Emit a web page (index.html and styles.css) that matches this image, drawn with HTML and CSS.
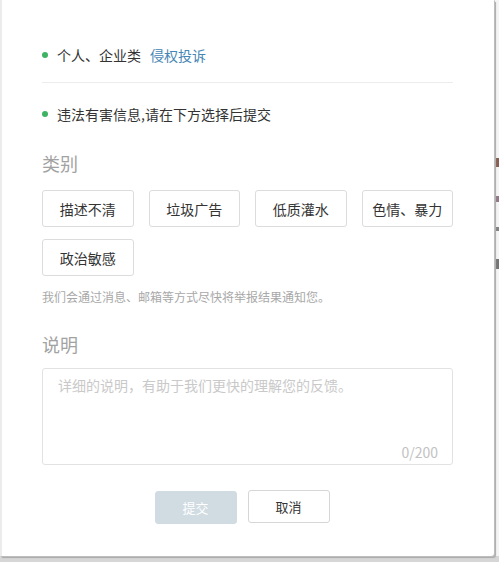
FILE: index.html
```html
<!DOCTYPE html>
<html lang="zh-CN">
<head>
<meta charset="utf-8">
<link rel="stylesheet" href="styles.css">
</head>
<body>
<div class="page">
  <div class="behind">
    <span class="frag f1"></span>
    <span class="frag f2"></span>
    <span class="frag f3"></span>
    <span class="frag f4"></span>
  </div>
  <div class="dialog">
    <div class="line first"><span class="dot"></span>个人、企业类<a class="link">侵权投诉</a></div>
    <div class="divider"></div>
    <div class="line second"><span class="dot"></span>违法有害信息,请在下方选择后提交</div>
    <div class="heading h-cat">类别</div>
    <div class="cats">
      <button class="cat">描述不清</button>
      <button class="cat">垃圾广告</button>
      <button class="cat">低质灌水</button>
      <button class="cat">色情、暴力</button>
      <button class="cat">政治敏感</button>
    </div>
    <div class="note">我们会通过消息、邮箱等方式尽快将举报结果通知您。</div>
    <div class="heading h-desc">说明</div>
    <div class="textbox">
      <textarea class="ta" placeholder="详细的说明，有助于我们更快的理解您的反馈。"></textarea>
      <div class="count">0/200</div>
    </div>
    <div class="footer">
      <button class="btn submit">提交</button>
      <button class="btn cancel">取消</button>
    </div>
  </div>
</div>
</body>
</html>
```

FILE: styles.css
```css
html, body {
  margin: 0;
  padding: 0;
}
body {
  width: 499px;
  height: 562px;
  overflow: hidden;
  background: #d6d6d6;
  font-family: "Noto Sans CJK SC", "Noto Sans", sans-serif;
  color: #333;
}
.page {
  position: relative;
  width: 499px;
  height: 562px;
}
.behind {
  position: absolute;
  right: 0;
  top: 0;
  width: 4px;
  height: 556px;
  background: #f4f4f4;
}
.frag {
  position: absolute;
  left: 1px;
  width: 3px;
  height: 9px;
  background: #555;
  opacity: 0.8;
}
.f1 { top: 158px; background: #6b3a2a; }
.f2 { top: 196px; height: 6px; background: #7a5a6a; }
.f3 { top: 227px; height: 4px; background: #666; }
.f4 { top: 259px; height: 10px; background: #555; }
.dialog {
  position: relative;
  box-sizing: border-box;
  width: 494px;
  height: 556px;
  background: #fff;
  border-left: 2px solid #ececec;
  border-radius: 0 0 3px 0;
  box-shadow: 1px 1px 0 #bdbdbd, 2px 2px 1px #a9a9a9;
  padding: 45px 41px 0 40px;
}
.line {
  display: flex;
  align-items: center;
  font-size: 14px;
  line-height: 20px;
  height: 20px;
  white-space: pre;
}
.dot {
  width: 6px;
  height: 6px;
  border-radius: 50%;
  background: #3db363;
  margin: 0 9px 0 0;
  flex: none;
}
.link {
  color: #4586b5;
  margin-left: 9px;
}
.divider {
  height: 1px;
  background: #ececec;
  margin: 17px 0 21px;
}
.heading {
  font-size: 18px;
  line-height: 24px;
  color: #a2a2a2;
}
.h-cat { margin-top: 27px; }
.h-desc { margin-top: 26px; }
.cats {
  display: grid;
  grid-template-columns: repeat(4, 1fr);
  column-gap: 15px;
  row-gap: 12px;
  margin-top: 15px;
}
.cat {
  height: 37px;
  border: 1px solid #dcdcdc;
  border-radius: 3px;
  background: #fff;
  font-family: inherit;
  font-size: 14px;
  color: #333;
  padding: 0;
}
.note {
  margin-top: 12px;
  font-size: 12px;
  line-height: 18px;
  color: #a8a8a8;
}
.textbox {
  margin-top: 12px;
  height: 97px;
  box-sizing: border-box;
  border: 1px solid #e2e2e2;
  border-radius: 3px;
  display: flex;
  flex-direction: column;
}
.ta {
  flex: 1;
  border: none;
  outline: none;
  resize: none;
  font-family: inherit;
  font-size: 14px;
  line-height: 20px;
  padding: 6px 15px 0;
  color: #333;
  background: transparent;
}
.ta::placeholder {
  color: #c9c9c9;
}
.count {
  text-align: right;
  font-size: 14px;
  line-height: 20px;
  color: #c2c2c2;
  padding: 0 14px 2px 0;
}
.footer {
  display: flex;
  justify-content: center;
  gap: 11px;
  margin-top: 25px;
  padding-right: 11px;
}
.btn {
  width: 82px;
  height: 33px;
  border-radius: 3px;
  font-family: inherit;
  font-size: 13px;
  padding: 0;
}
.submit {
  background: #d0dbe2;
  border: 1px solid #d0dbe2;
  color: #fff;
  margin-top: 1px;
}
.cancel {
  background: #fff;
  border: 1px solid #d6d6d6;
  color: #333;
}
```
